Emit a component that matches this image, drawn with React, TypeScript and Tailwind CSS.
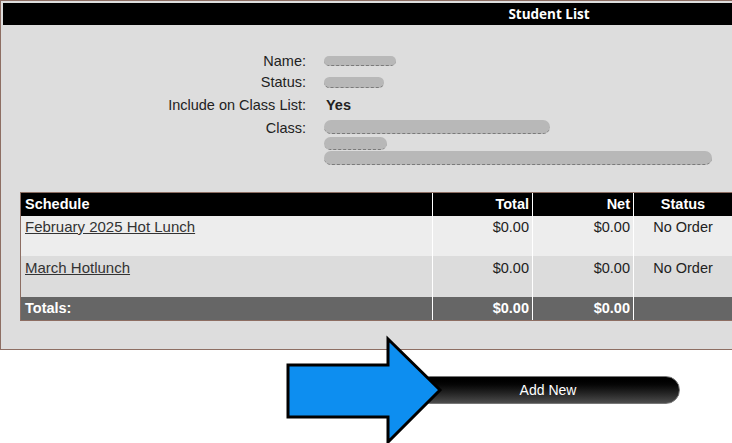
import React from "react";

function Blob({ w, h, className = "" }: { w: number; h: number; className?: string }) {
  return (
    <div
      className={"rounded-full bg-[#b8b8b8] border-b border-dashed border-[#7a7a7a] " + className}
      style={{ width: w, height: h }}
    />
  );
}

export default function App() {
  return (
    <div className="relative w-[732px] h-[443px] overflow-hidden bg-white font-['Liberation_Sans',Arial,sans-serif] text-[14.5px] text-[#222]">
      {/* Panel */}
      <div className="w-[1098px] border border-[#8d6e63] bg-[#dddddd] p-[2px] pb-[28px]">
        <div className="h-[22px] bg-black flex items-center justify-center text-white font-bold text-[13.5px] font-['Open_Sans',sans-serif]">
          Student List
        </div>

        {/* Info */}
        <div className="mt-[26px] grid grid-cols-[303px_1fr] leading-[16px]">
          <div className="h-[21px] text-right pt-[2px]">Name:</div>
          <div className="h-[21px] pl-[18px] pt-[5px]">
            <Blob w={72} h={10} />
          </div>
          <div className="h-[21px] text-right pt-[2px]">Status:</div>
          <div className="h-[21px] pl-[18px] pt-[5px]">
            <Blob w={60} h={11} />
          </div>
          <div className="h-[24px] text-right pt-[4px]">Include on Class List:</div>
          <div className="h-[24px] pl-[20px] pt-[4px] font-bold">Yes</div>
          <div className="text-right pt-[3px]">Class:</div>
          <div className="pl-[18px] pt-[3px] flex flex-col gap-[3px]">
            <Blob w={226} h={14} />
            <Blob w={63} h={13} className="-mb-[2px]" />
            <Blob w={388} h={14} />
          </div>
        </div>

        {/* Table */}
        <div className="mt-[27px] ml-[17px] mr-[17px] border border-[#8d6e63]">
          <div className="flex h-[23px] bg-black text-white font-bold leading-[23px]">
            <div className="w-[411px] pl-[4px]">Schedule</div>
            <div className="w-[100px] border-l border-white text-right pr-[3px]">Total</div>
            <div className="w-[101px] border-l border-white text-right pr-[3px]">Net</div>
            <div className="w-[99px] border-l border-white text-center">Status</div>
            <div className="flex-1" />
          </div>
          <div className="flex h-[40px] bg-[#ededed] leading-[18px]">
            <div className="w-[411px] pl-[4px] pt-[2px]">
              <span className="underline text-[#333] text-[15px]">February 2025 Hot Lunch</span>
            </div>
            <div className="w-[100px] border-l border-white text-right pr-[3px] pt-[2px]">$0.00</div>
            <div className="w-[101px] border-l border-white text-right pr-[3px] pt-[2px]">$0.00</div>
            <div className="w-[99px] border-l border-white text-center pt-[2px]">No Order</div>
            <div className="flex-1" />
          </div>
          <div className="flex h-[41px] bg-[#dcdcdc] leading-[18px]">
            <div className="w-[411px] pl-[4px] pt-[3px]">
              <span className="underline text-[#333] text-[15px]">March Hotlunch</span>
            </div>
            <div className="w-[100px] border-l border-white text-right pr-[3px] pt-[3px]">$0.00</div>
            <div className="w-[101px] border-l border-white text-right pr-[3px] pt-[3px]">$0.00</div>
            <div className="w-[99px] border-l border-white text-center pt-[3px]">No Order</div>
            <div className="flex-1" />
          </div>
          <div className="flex h-[23px] bg-[#666666] text-white font-bold leading-[23px]">
            <div className="w-[411px] pl-[4px]">Totals:</div>
            <div className="w-[100px] border-l border-white text-right pr-[3px]">$0.00</div>
            <div className="w-[101px] border-l border-white text-right pr-[3px]">$0.00</div>
            <div className="w-[99px] border-l border-white" />
            <div className="flex-1" />
          </div>
        </div>
      </div>

      {/* Add New button */}
      <div className="mt-[26px] pl-[416px]">
        <div className="w-[264px] h-[28px] rounded-full border border-[#777] bg-gradient-to-b from-[#000000] to-[#4d4d4d] flex items-center justify-center text-white text-[14px]">
          Add New
        </div>
      </div>

      {/* Arrow overlay */}
      <svg className="absolute left-0 top-0" width="732" height="443" viewBox="0 0 732 443">
        <polygon
          points="288,365 388,365 388,339 440,390 388,442 388,417 288,417"
          fill="#0d8ef0"
          stroke="#000"
          strokeWidth="3"
          strokeLinejoin="miter"
        />
      </svg>
    </div>
  );
}
